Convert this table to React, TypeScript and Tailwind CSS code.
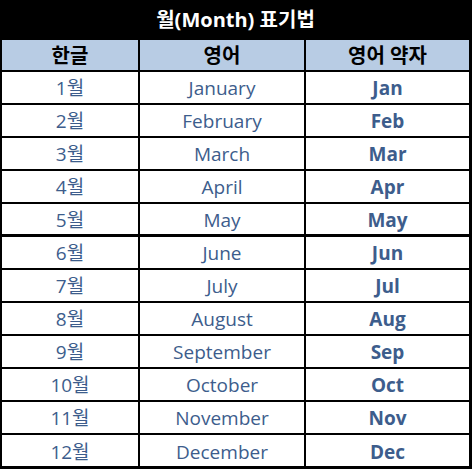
const months = [
  ["1월", "January", "Jan"],
  ["2월", "February", "Feb"],
  ["3월", "March", "Mar"],
  ["4월", "April", "Apr"],
  ["5월", "May", "May"],
  ["6월", "June", "Jun"],
  ["7월", "July", "Jul"],
  ["8월", "August", "Aug"],
  ["9월", "September", "Sep"],
  ["10월", "October", "Oct"],
  ["11월", "November", "Nov"],
  ["12월", "December", "Dec"],
];

const font = { fontFamily: '"Open Sans", "Noto Sans CJK KR", sans-serif' };

export default function App() {
  return (
    <div className="w-[472px] h-[469px] bg-white" style={font}>
      <div className="flex flex-col h-full border-l-2 border-r-[3px] border-b-[3px] border-black">
        <div className="h-[40px] bg-black text-white font-bold text-[20px] flex items-center justify-center pt-[1px]">
          월(Month) 표기법
        </div>
        <div className="flex h-[32px] bg-[#b8cce4] border-b-2 border-black text-black font-bold text-[20px]">
          <div className="w-[138px] border-r-2 border-black flex items-center justify-center pt-[2px]">한글</div>
          <div className="w-[166px] border-r-2 border-black flex items-center justify-center pt-[2px]">영어</div>
          <div className="flex-1 flex items-center justify-center pt-[2px]">영어 약자</div>
        </div>
        {months.map(([ko, en, abbr], i) => (
          <div
            key={ko}
            className={
              i === months.length - 1
                ? "flex flex-1 text-[#3d5d8c] text-[19px]"
                : i === 4
                ? "flex h-[33px] border-b-[3px] border-black text-[#3d5d8c] text-[19px]"
                : "flex h-[33px] border-b-2 border-black text-[#3d5d8c] text-[19px]"
            }
          >
            <div className="w-[138px] border-r-2 border-black flex items-center justify-center pt-[3px]">{ko}</div>
            <div className="w-[166px] border-r-2 border-black flex items-center justify-center pt-[3px]">{en}</div>
            <div className="flex-1 flex items-center justify-center font-bold pt-[3px]">{abbr}</div>
          </div>
        ))}
      </div>
    </div>
  );
}
